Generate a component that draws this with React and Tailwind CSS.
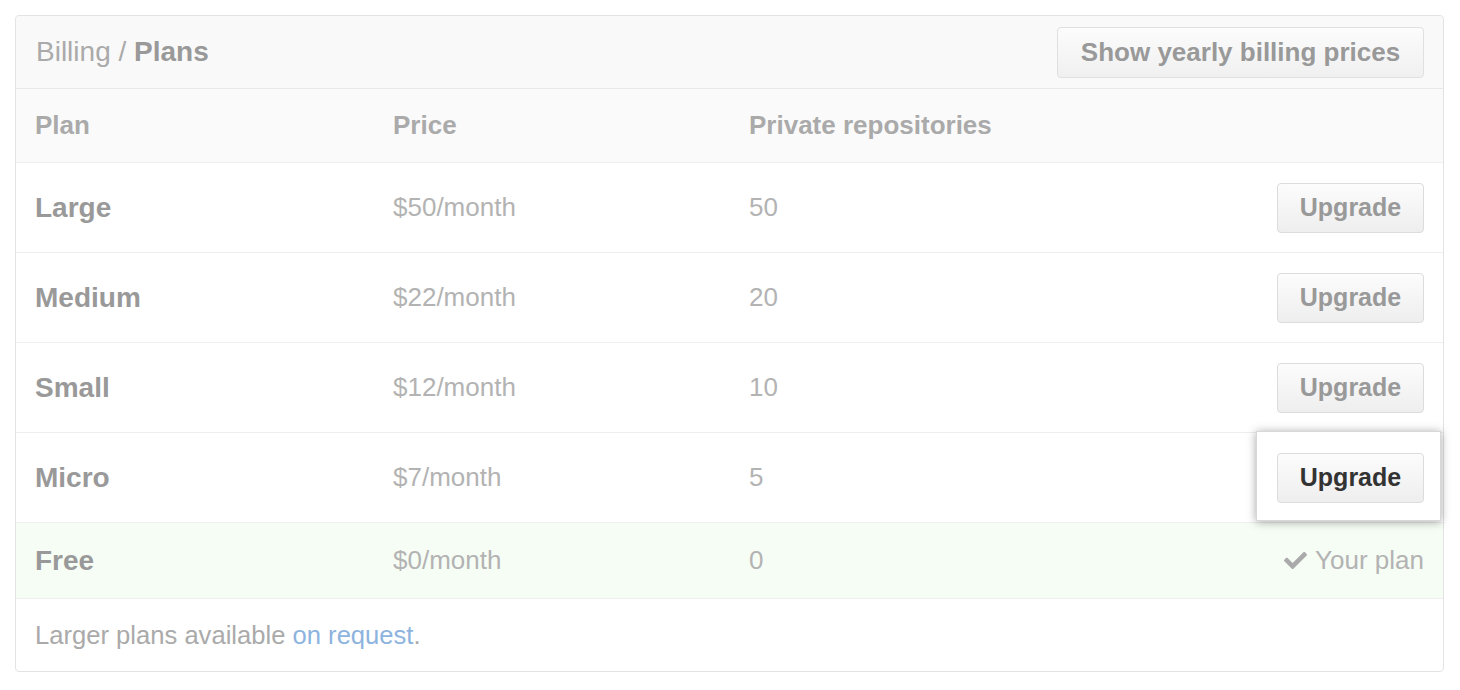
import React from "react";
import { FaCheck } from "react-icons/fa";

const PLANS = [
  { name: "Large", price: "$50/month", repos: "50" },
  { name: "Medium", price: "$22/month", repos: "20" },
  { name: "Small", price: "$12/month", repos: "10" },
  { name: "Micro", price: "$7/month", repos: "5", highlight: true },
];

const cols = "grid grid-cols-[358px_356px_1fr_auto] items-center";

function UpgradeButton({ active }) {
  return (
    <button
      className={`h-[50px] w-[147px] rounded-[4px] border border-[#dcdcdc] bg-gradient-to-b from-[#fcfcfc] to-[#eeeeee] text-[25px] font-bold ${
        active ? "text-[#333]" : "text-[#999]"
      }`}
    >
      Upgrade
    </button>
  );
}

export default function App() {
  return (
    <div className="min-h-[690px] bg-white pl-[15px] pt-[15px] font-['Liberation_Sans',Arial,sans-serif]">
      <div className="w-[1429px] rounded-[4px] border border-[#e3e3e3]">
        {/* Header */}
        <div className="flex h-[73px] items-center justify-between rounded-t-[4px] border-b border-[#e8e8e8] bg-[#f9f9f9] pl-[20px] pr-[19px]">
          <div className="text-[28px] text-[#aaa]">
            Billing / <span className="font-bold text-[#999]">Plans</span>
          </div>
          <button className="h-[51px] w-[367px] rounded-[4px] border border-[#e0e0e0] bg-gradient-to-b from-[#fcfcfc] to-[#f0f0f0] text-[26px] font-bold text-[#999]">
            Show yearly billing prices
          </button>
        </div>

        {/* Column headings */}
        <div className={`${cols} h-[74px] border-b border-[#eeeeee] bg-[#fafafa] px-[19px] text-[26px] font-bold text-[#aaa]`}>
          <div>Plan</div>
          <div>Price</div>
          <div>Private repositories</div>
          <div />
        </div>

        {PLANS.map((p) => (
          <div key={p.name} className={`${cols} h-[90px] border-b border-[#eeeeee] px-[19px]`}>
            <div className="text-[28px] font-bold text-[#999]">{p.name}</div>
            <div className="text-[26px] text-[#b3b3b3]">{p.price}</div>
            <div className="text-[26px] text-[#b3b3b3]">{p.repos}</div>
            <div className="relative">
              {p.highlight && (
                <div className="absolute -left-[21px] -top-[22px] h-[90px] w-[185px] border border-[#d8d8d8] bg-white shadow-[0_1px_9px_rgba(0,0,0,0.35)]" />
              )}
              <div className="relative">
                <UpgradeButton active={p.highlight} />
              </div>
            </div>
          </div>
        ))}

        {/* Current plan */}
        <div className={`${cols} h-[76px] border-b border-[#eeeeee] bg-[#f6fdf5] px-[19px]`}>
          <div className="text-[28px] font-bold text-[#999]">Free</div>
          <div className="text-[26px] text-[#b3b3b3]">$0/month</div>
          <div className="text-[26px] text-[#b3b3b3]">0</div>
          <div className="flex items-center gap-[8px] text-[26px] text-[#b3b3b3]">
            <FaCheck className="h-[23px] w-[23px] text-[#aaa]" />
            Your plan
          </div>
        </div>

        {/* Footer */}
        <div className="flex h-[72px] items-center pl-[19px] text-[25.6px] text-[#aaa]">
          Larger plans available&nbsp;<a className="text-[#8db4de]">on request</a>.
        </div>
      </div>
    </div>
  );
}
